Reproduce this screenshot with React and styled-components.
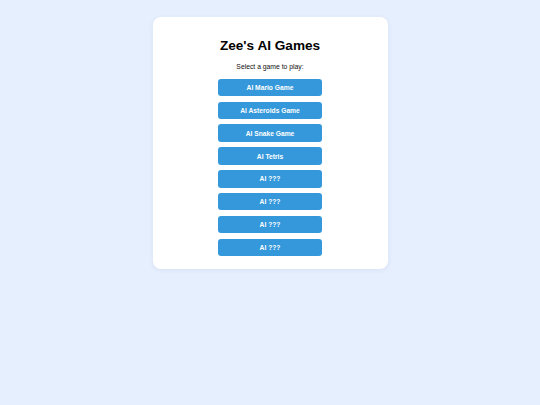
import React from "react";
import styled, { createGlobalStyle } from "styled-components";

const Global = createGlobalStyle`
  html, body {
    margin: 0;
    padding: 0;
    background: #e6effd;
    font-family: "Liberation Sans", Arial, sans-serif;
  }
  body {
    min-height: 405px;
  }
`;

const Page = styled.div`
  display: flex;
  justify-content: center;
  padding-top: 16.7px;
`;

const Card = styled.div`
  width: 235px;
  box-sizing: border-box;
  background: #ffffff;
  border-radius: 8px;
  box-shadow: 0 1px 5px rgba(40, 70, 140, 0.08);
  padding: 21.3px 0 13.1px;
  display: flex;
  flex-direction: column;
  align-items: center;
`;

const Title = styled.h1`
  margin: 0;
  font-size: 13.6px;
  line-height: 15.4px;
  font-weight: 700;
  color: #000;
`;

const Subtitle = styled.p`
  margin: 9.8px 0 7.8px;
  font-size: 6.8px;
  line-height: 7.7px;
  color: #111;
`;

const List = styled.div`
  display: flex;
  flex-direction: column;
  gap: 5.36px;
`;

const GameButton = styled.button`
  width: 104.5px;
  height: 17.5px;
  padding: 0;
  border: none;
  border-radius: 3px;
  background: #3498db;
  color: #ffffff;
  font-family: "Liberation Sans", Arial, sans-serif;
  font-size: 6.7px;
  font-weight: 700;
  cursor: pointer;
  display: flex;
  align-items: center;
  justify-content: center;
`;

const games = [
  "AI Mario Game",
  "AI Asteroids Game",
  "AI Snake Game",
  "AI Tetris",
  "AI ???",
  "AI ???",
  "AI ???",
  "AI ???",
];

export default function App() {
  return (
    <>
      <Global />
      <Page>
        <Card>
          <Title>Zee's AI Games</Title>
          <Subtitle>Select a game to play:</Subtitle>
          <List>
            {games.map((g, i) => (
              <GameButton key={i}>{g}</GameButton>
            ))}
          </List>
        </Card>
      </Page>
    </>
  );
}
